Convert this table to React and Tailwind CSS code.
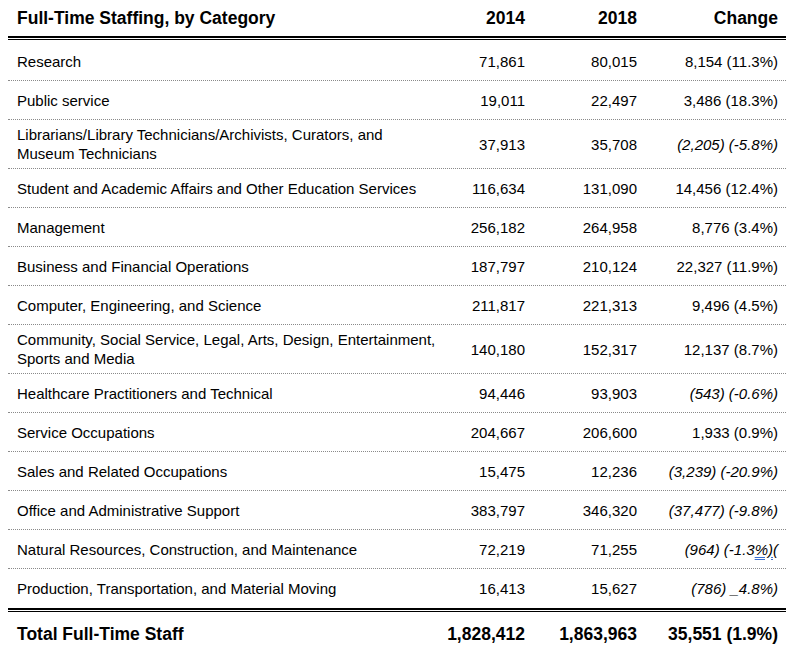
import React from "react";

const rows = [
  ["Research", "71,861", "80,015", "8,154 (11.3%)"],
  ["Public service", "19,011", "22,497", "3,486 (18.3%)"],
  [
    <>
      Librarians/Library Technicians/Archivists, Curators, and
      <br />
      Museum Technicians
    </>,
    "37,913",
    "35,708",
    "(2,205) (-5.8%)",
    true,
  ],
  ["Student and Academic Affairs and Other Education Services", "116,634", "131,090", "14,456 (12.4%)"],
  ["Management", "256,182", "264,958", "8,776 (3.4%)"],
  ["Business and Financial Operations", "187,797", "210,124", "22,327 (11.9%)"],
  ["Computer, Engineering, and Science", "211,817", "221,313", "9,496 (4.5%)"],
  [
    <>
      Community, Social Service, Legal, Arts, Design, Entertainment,
      <br />
      Sports and Media
    </>,
    "140,180",
    "152,317",
    "12,137 (8.7%)",
    true,
  ],
  ["Healthcare Practitioners and Technical", "94,446", "93,903", "(543) (-0.6%)"],
  ["Service Occupations", "204,667", "206,600", "1,933 (0.9%)"],
  ["Sales and Related Occupations", "15,475", "12,236", "(3,239) (-20.9%)"],
  ["Office and Administrative Support", "383,797", "346,320", "(37,477) (-9.8%)"],
  [
    "Natural Resources, Construction, and Maintenance",
    "72,219",
    "71,255",
    <>
      (964) (-1.3
      <span className="underline decoration-double decoration-[#3b6fd1] underline-offset-2">%)</span>(
    </>,
  ],
  ["Production, Transportation, and Material Moving", "16,413", "15,627", "(786) _4.8%)"],
];

const cols = "grid grid-cols-[minmax(0,1fr)_110px_112px_141px] items-center";

const DoubleRule = () => (
  <div className="flex flex-col gap-px">
    <div className="h-[2px] bg-black" />
    <div className="h-px bg-black" />
  </div>
);

export default function App() {
  return (
    <div className="w-[800px] h-[656px] bg-white text-black font-['Liberation_Sans',Arial,sans-serif] pl-2 pr-[14px] overflow-hidden">
      <div className={`${cols} h-9 pl-[9px] pr-2 text-[17.5px] font-bold`}>
        <div>Full-Time Staffing, by Category</div>
        <div className="text-right">2014</div>
        <div className="text-right">2018</div>
        <div className="text-right">Change</div>
      </div>
      <DoubleRule />
      <div className="mt-[2px]">
        {rows.map(([label, a, b, c, tall], i) => {
          const neg = typeof c !== "string" || c.startsWith("(");
          return (
            <div
              key={i}
              className={`${cols} pl-[9px] pr-2 text-[15px] leading-[19px] ${
                tall ? "h-[49px]" : "h-[39px]"
              } ${i < rows.length - 1 ? "border-b border-dotted border-[#8a8a8a]" : ""}`}
            >
              <div className="whitespace-nowrap">{label}</div>
              <div className="text-right">{a}</div>
              <div className="text-right">{b}</div>
              <div className={`text-right ${neg ? "italic" : ""}`}>{c}</div>
            </div>
          );
        })}
      </div>
      <DoubleRule />
      <div className={`${cols} h-11 pl-[9px] pr-2 text-[17.5px] font-bold`}>
        <div>Total Full-Time Staff</div>
        <div className="text-right">1,828,412</div>
        <div className="text-right">1,863,963</div>
        <div className="text-right">35,551 (1.9%)</div>
      </div>
    </div>
  );
}
